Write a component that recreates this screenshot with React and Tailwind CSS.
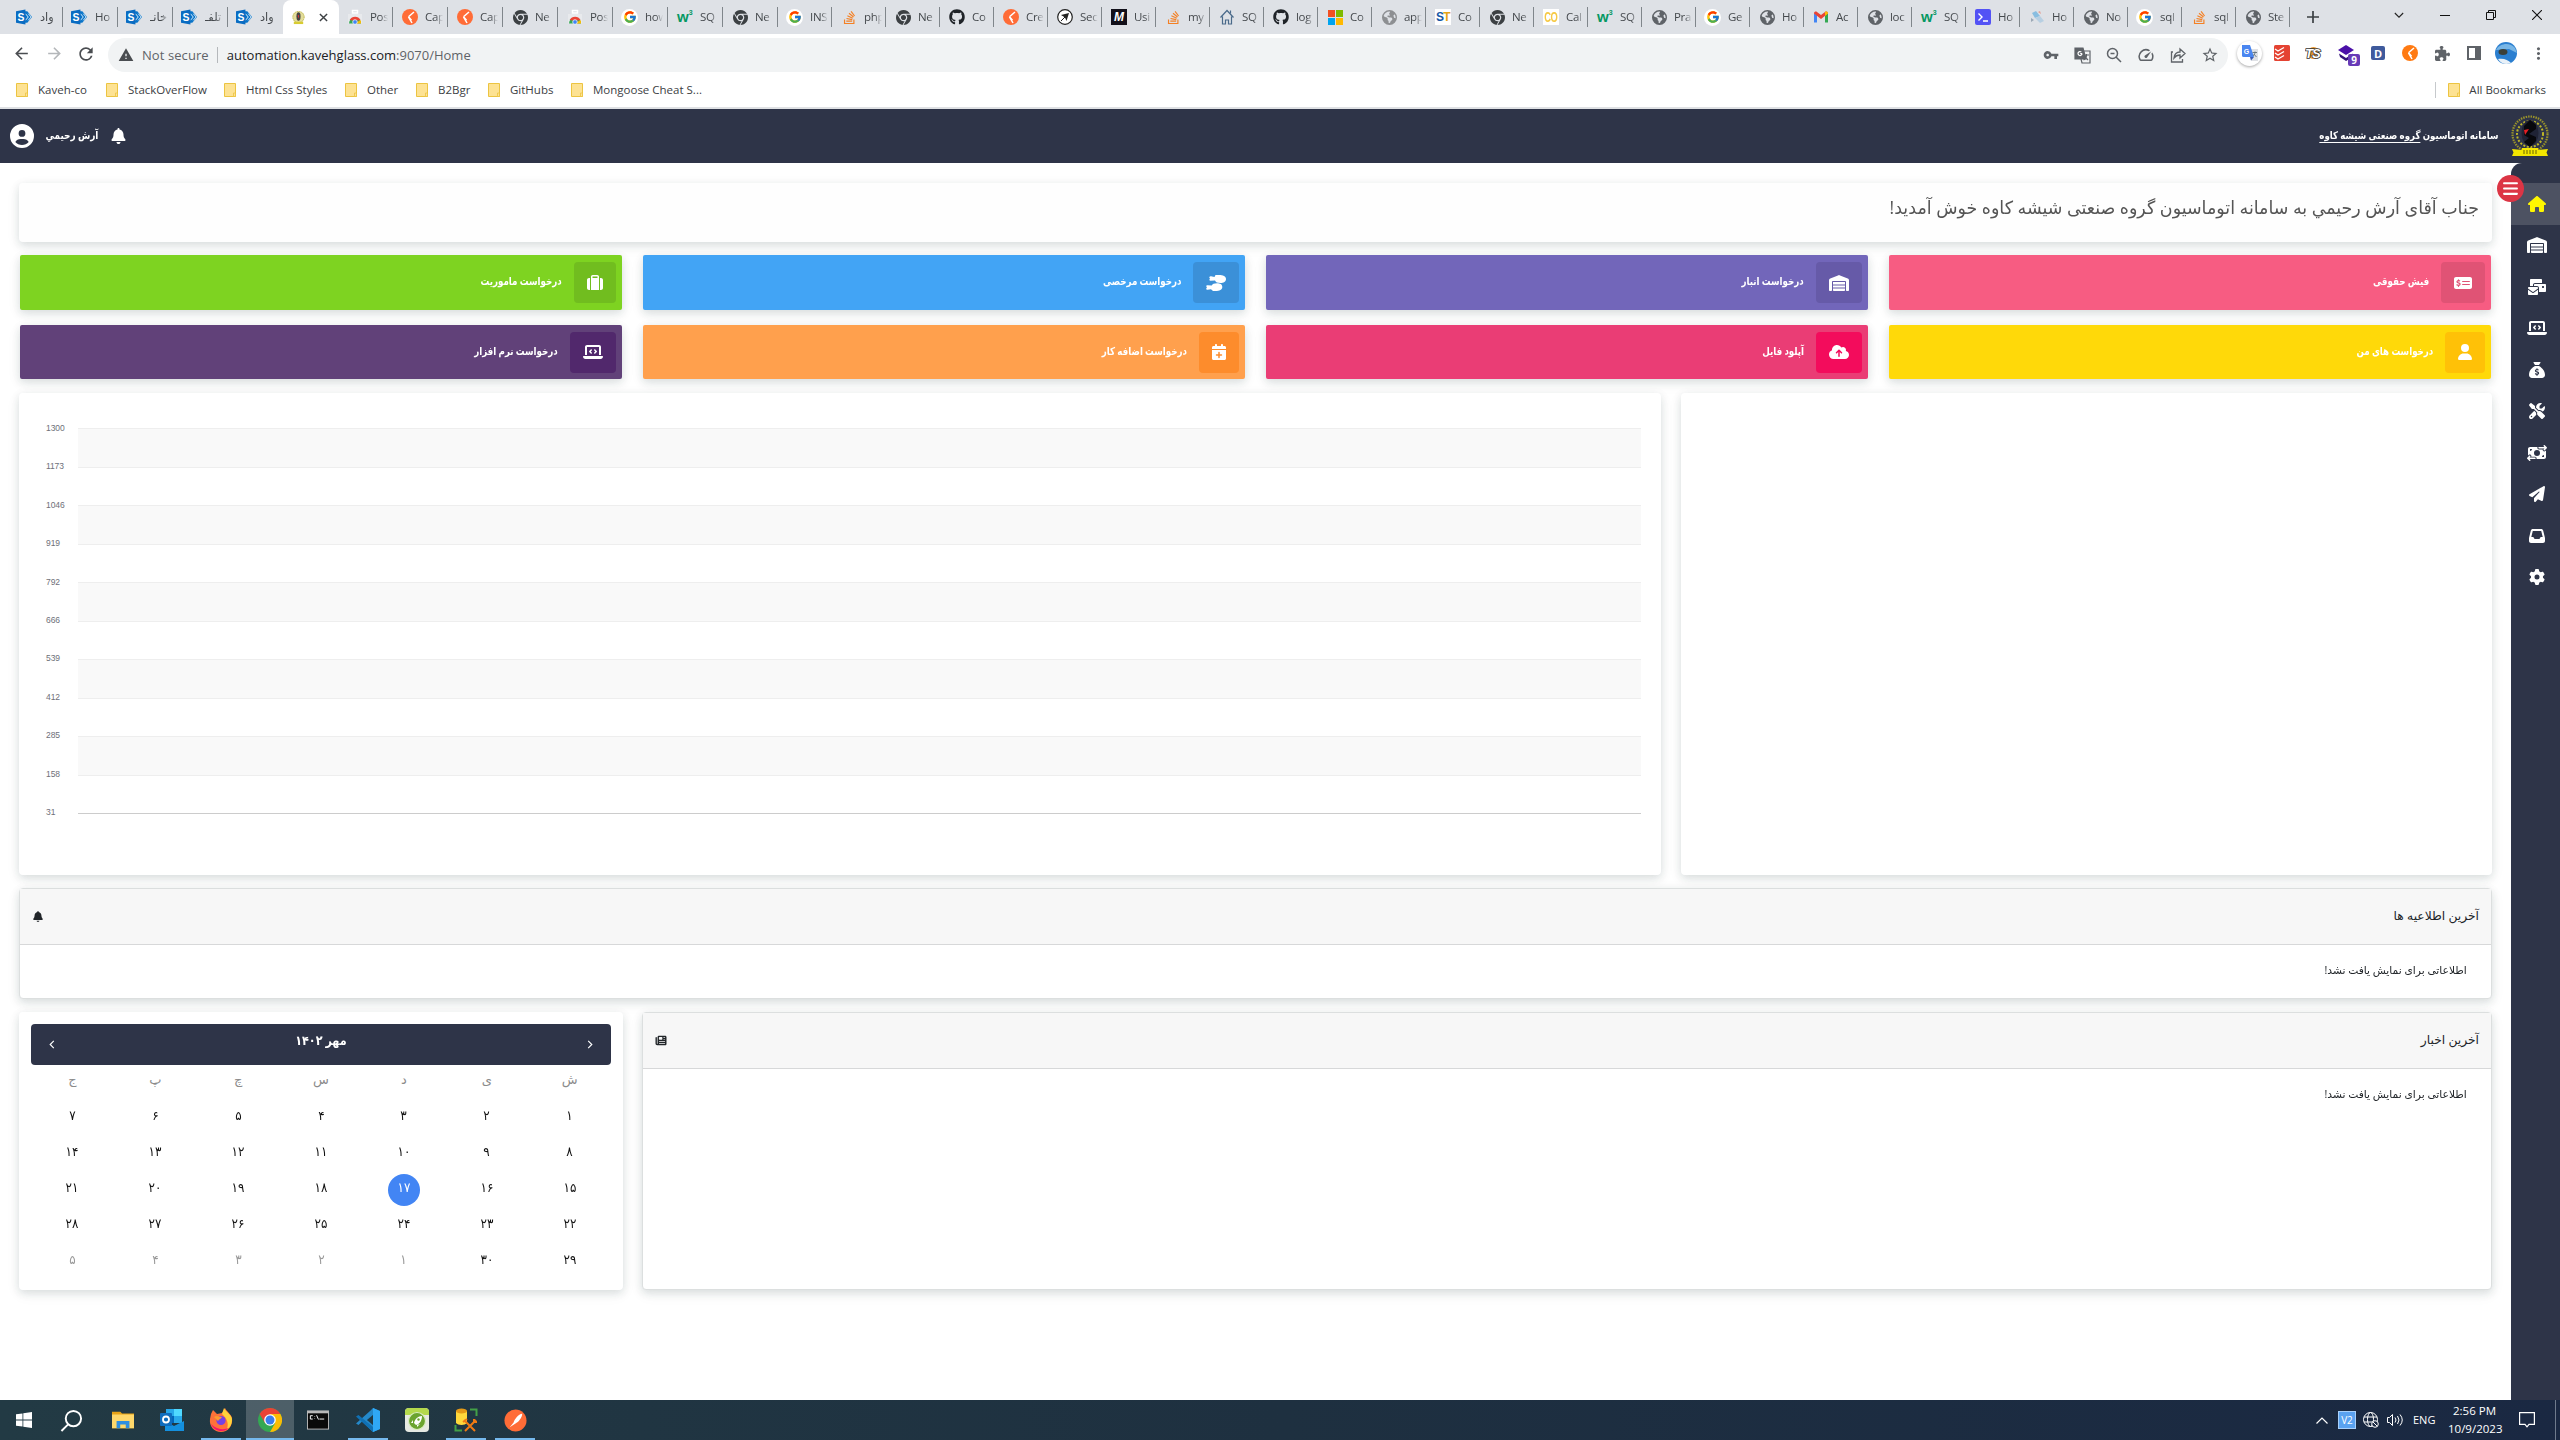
import React from "react";
import {
  FaHouse, FaWarehouse, FaEnvelopesBulk, FaLaptopCode, FaSackDollar, FaScrewdriverWrench,
  FaMoneyBillTransfer, FaPaperPlane, FaInbox, FaGear, FaCircleUser, FaBell, FaMoneyCheckDollar,
  FaSuitcase, FaCloudArrowUp, FaCalendarPlus, FaUser, FaNewspaper, FaBars,
  FaChrome, FaGithub, FaStackOverflow, FaEarthAmericas, FaPuzzlePiece,
} from "react-icons/fa6";
import { FcGoogle } from "react-icons/fc";
import {
  MdArrowBack, MdArrowForward, MdRefresh, MdWarning, MdStarBorder, MdMoreVert, MdSpeed, MdVpnKey,
} from "react-icons/md";

const ui = "font-['Open_Sans','DejaVu_Sans',sans-serif]";

/* ---------- tab favicons ---------- */
const SharePoint = () => (
  <svg viewBox="0 0 18 16" className="h-4 w-[17px]">
    <path d="M9 2h3l5 6-5 6H9z" fill="#0a75c9" />
    <path d="M10 4.500l3 3.500-3 3.500M13 4.500L16 8l-3 3.500" stroke="#fff" strokeWidth=".9" fill="none" />
    <path d="M0 2l10-2v16L0 14z" fill="#0a6cc2" />
    <text x="1.500" y="12" fontSize="11" fontWeight="700" fill="#fff" fontFamily="Liberation Sans">S</text>
  </svg>
);
const Store = () => (
  <svg viewBox="0 0 16 16" className="size-4">
    <path d="M1 5h14v9.500H1z" fill="#e8eaed" />
    <path d="M5.500 1.500h5V4h-5z" fill="none" stroke="#fff" strokeWidth="1.500" />
    <path d="M2 14.500a6 6 0 0 1 12 0z" fill="#34a853" />
    <path d="M2.800 11a6 6 0 0 1 10.600 0L8 12z" fill="#ea4335" />
    <path d="M13.400 11a6 6 0 0 1 .6 3.500H8z" fill="#fbbc05" />
    <circle cx="8" cy="13" r="2.300" fill="#4285f4" stroke="#fff" strokeWidth=".7" />
  </svg>
);
const Postman = ({ color = "#ff6c37" }) => (
  <svg viewBox="0 0 16 16" className="size-4">
    <circle cx="8" cy="8" r="8" fill={color} />
    <path d="M12 3L6.500 7.800M6.500 7.800l3 3.500M6.500 7.800L10 14" stroke="#fff" strokeWidth="1.500" fill="none" />
  </svg>
);
const ChromeGrey = () => <FaChrome className="size-[15px] text-[#3c4043]" />;
const GoogleG = () => (
  <span className="flex size-[17px] items-center justify-center rounded-full bg-white"><FcGoogle className="size-[14px]" /></span>
);
const W3 = () => (
  <span className="flex w-4 items-start font-['Liberation_Sans'] text-[15px] leading-4 font-bold text-[#059862]">w<span className="text-[7px] leading-2">3</span></span>
);
const StackO = () => <FaStackOverflow className="size-[15px] text-[#f48024]" />;
const Github = () => <FaGithub className="size-4 text-[#1f2328]" />;
const Globe = () => <FaEarthAmericas className="size-[15px] text-[#5f6368]" />;
const GlobeLight = () => <FaEarthAmericas className="size-[15px] text-[#8d8f92]" />;
const Compass = () => (
  <svg viewBox="0 0 16 16" className="size-4">
    <circle cx="8" cy="8" r="7.300" fill="#fff" stroke="#222" strokeWidth="1.200" />
    <path d="M4 6l8-2-2.500 8-1.500-3.500z" fill="#222" /><path d="M4 12l4-4" stroke="#222" />
  </svg>
);
const Medium = () => (
  <span className="flex size-4 items-center justify-center bg-[#12101a] font-['Liberation_Sans'] text-[12px] leading-none font-bold text-white italic">M</span>
);
const House = () => (
  <svg viewBox="0 0 16 16" className="size-4" fill="none" stroke="#4a6a8a" strokeWidth="1.200">
    <path d="M1.500 8.500L8 1.500l6.500 7M3.500 7.500V15h3v-4h3v4h3V7.500" /><path d="M11.500 1.500v3" />
  </svg>
);
const Microsoft = () => (
  <span className="grid size-[15px] grid-cols-2 gap-px">
    <i className="bg-[#f25022]" /><i className="bg-[#7fba00]" /><i className="bg-[#00a4ef]" /><i className="bg-[#ffb900]" />
  </span>
);
const ST = () => (
  <span className="flex size-4 items-center justify-center bg-white font-['Liberation_Sans'] text-[12px] leading-none font-bold tracking-tighter text-[#1458a6]">S<b className="text-[#e6a417]">T</b></span>
);
const CO = () => (
  <span className="flex size-4 items-center justify-center bg-white font-['Liberation_Sans'] text-[11px] leading-none font-bold tracking-tighter text-[#f6c945]">
    <span className="scale-x-[0.85] scale-y-[1.3]">CO</span>
  </span>
);
const Gmail = () => (
  <svg viewBox="0 0 16 16" className="size-4">
    <path d="M1 13.500V4l3 2.300v7.200z" fill="#4285f4" /><path d="M15 13.500V4l-3 2.300v7.200z" fill="#34a853" />
    <path d="M1 4.500C1 2.500 3 2 4 3l4 3 4-3c1-1 3-.5 3 1.500L8 10z" fill="#ea4335" /><path d="M12 3c1-1 3-.5 3 1.500L12 7z" fill="#fbbc05" />
  </svg>
);
const Terminal = () => (
  <svg viewBox="0 0 16 16" className="size-4"><rect width="16" height="16" rx="2" fill="#5352f5" /><path d="M3.500 4.500L7 8l-3.500 3.500M8 12h5" stroke="#fff" strokeWidth="1.400" fill="none" /></svg>
);
const Flake = () => (
  <svg viewBox="0 0 16 16" className="size-4"><path d="M3 4l4-2 4 5-5 2z" fill="#88bde0" /><path d="M6 9l5-2 4 5-4 2z" fill="#b7cfe2" /><path d="M9 3l2-1 1 3z" fill="#e49b8d" /><path d="M2 9l3 2-3 2z" fill="#9aa7b5" /></svg>
);
const Crest = () => (
  <svg viewBox="0 0 16 16" className="size-[15px]">
    <circle cx="8" cy="7.500" r="6.500" fill="#e3dd9a" /><circle cx="8" cy="7.500" r="6" fill="none" stroke="#b9b04a" strokeDasharray="1 1" />
    <ellipse cx="8" cy="7" rx="2.200" ry="4.500" fill="#444" /><path d="M7 6l1.500-1v4z" fill="#d33" /><path d="M3 12.500h10V15H3z" fill="#d8cc33" />
  </svg>
);

const firstTabs = [
  [SharePoint, "واد"], [SharePoint, "Ho"], [SharePoint, "خانـ"], [SharePoint, "تلفـ"], [SharePoint, "واد"],
];
const midTabs = [
  [Store, "Pos"], [Postman, "Cap"], [Postman, "Cap"], [ChromeGrey, "Ne"], [Store, "Pos"],
  [GoogleG, "how"], [W3, "SQ"], [ChromeGrey, "Ne"],
];
const lastTabs = [
  [GoogleG, "INS"], [StackO, "php"], [ChromeGrey, "Ne"], [Github, "Co"], [Postman, "Cre"], [Compass, "Sec"],
  [Medium, "Usi"], [StackO, "my"], [House, "SQ"], [Github, "log"], [Microsoft, "Co"], [GlobeLight, "app"],
  [ST, "Co"], [ChromeGrey, "Ne"], [CO, "Cal"], [W3, "SQ"], [Globe, "Pra"], [GoogleG, "Ge"], [Globe, "Ho"],
  [Gmail, "Ac"], [Globe, "loc"], [W3, "SQ"], [Terminal, "Ho"], [Flake, "Ho"], [Globe, "No"], [GoogleG, "sql"],
  [StackO, "sql"], [Globe, "Ste"],
];

function Tab({ tab, wide, last }) {
  const [Icon, label] = tab;
  return (
    <div className={`flex h-[34px] shrink-0 items-center ${wide ? "w-[55px]" : "w-[54px]"}`}>
      <span className="flex w-[25px] justify-end"><Icon /></span>
      <span className="ml-[7px] w-[18px] overflow-hidden [mask-image:linear-gradient(to_right,black_60%,transparent)] text-[11.500px] leading-4 tracking-[-0.3px] whitespace-nowrap text-[#45494d]">{label}</span>
      <i className={`ml-auto h-5 w-px ${last ? "bg-transparent" : "bg-[#80868b]"}`} />
    </div>
  );
}

function TabStrip() {
  return (
    <div className="flex h-[34px] items-center bg-[#dee1e6]">
      <div className="flex w-[283px] pl-[8px]">
        {firstTabs.map((t, i) => <Tab key={i} tab={t} wide last={i === 4} />)}
      </div>
      <div className="flex h-[34px] w-[56px] shrink-0 items-center rounded-t-lg bg-white pl-2">
        <Crest />
        <svg viewBox="0 0 10 10" className="ml-[13px] size-[9px]" stroke="#3c4043" strokeWidth="1.600"><path d="M1 1l8 8M9 1l-8 8" /></svg>
      </div>
      <div className="-ml-px flex">
        {midTabs.map((t, i) => <Tab key={i} tab={t} wide />)}
        {lastTabs.map((t, i) => <Tab key={i} tab={t} />)}
      </div>
      <div className="flex flex-1 items-center pl-[17px]">
        <svg viewBox="0 0 12 12" className="size-3" stroke="#3c4043" strokeWidth="1.700"><path d="M6 0v12M0 6h12" /></svg>
        <div className="flex h-full flex-1 items-center pb-1 pl-[75px]">
          <svg viewBox="0 0 12 8" className="mr-[36px] h-[7px] w-[10px] shrink-0" fill="none" stroke="#222" strokeWidth="1.300"><path d="M1 1l5 5 5-5" /></svg>
          <i className="mr-[36px] h-px w-[10px] shrink-0 bg-[#111]" />
          <svg viewBox="0 0 10 10" className="mr-[36px] size-[10px] shrink-0" fill="none" stroke="#111"><path d="M.5 2.500h7v7h-7zM2.500 2.500v-2h7v7h-2" /></svg>
          <svg viewBox="0 0 10 10" className="size-[10px] shrink-0" stroke="#111" strokeWidth="1.100"><path d="M0 0l10 10M10 0L0 10" /></svg>
        </div>
      </div>
    </div>
  );
}

function Toolbar() {
  return (
    <div className="flex h-[38px] items-center bg-white text-[#5f6368]">
      <div className="flex w-[108px] items-center pt-px pl-[12px]">
        <MdArrowBack className="size-[19px] text-[#4a4d51]" />
        <MdArrowForward className="ml-[14px] size-[19px] text-[#b4b7ba]" />
        <MdRefresh className="ml-[12px] size-[20px] text-[#4a4d51]" />
      </div>
      <div className="mt-1 flex h-[34px] w-[1120px] grow items-center rounded-full bg-[#f1f3f4] pr-[9px] pl-[10px]">
        <MdWarning className="size-4 text-[#4a4d51]" />
        <span className="ml-[8px] text-[13px] leading-5 tracking-[0.08px] whitespace-nowrap">Not secure</span>
        <i className="ml-[8px] h-4 w-px bg-[#b5b8bb]" />
        <span className="ml-[9px] text-[13px] leading-5 whitespace-nowrap"><span className="text-[#202124]">automation.kavehglass.com</span>:9070/Home</span>
        <div className="ml-auto flex items-center gap-[15px]">
          <MdVpnKey className="size-[16px]" />
          <svg viewBox="0 0 17 17" className="size-[17px]" fill="none" stroke="#5f6368" strokeWidth="1.200">
            <path d="M1 1h8l3 11H1z" fill="#5f6368" /><path d="M10 4h6v12H8l-1-4M10 8h5M12.500 7v1c0 2-1 4-3 5M11 9c1 2 2 3 3 4" />
            <path d="M8 6.500H6.200M8 6.500A2 2 0 1 1 7.300 5" stroke="#fff" />
          </svg>
          <svg viewBox="0 0 16 16" className="size-[16px]" fill="none" stroke="#5f6368" strokeWidth="1.500"><circle cx="6.500" cy="6.500" r="5" /><path d="M10 10l5 5M4.500 6.500h4" /></svg>
          <MdSpeed className="size-[18px]" />
          <svg viewBox="0 0 16 16" className="size-[16px]" fill="none" stroke="#5f6368" strokeWidth="1.300"><path d="M3 5H1.500v10h11v-3M4 11c.5-4 3-6 6-6V2l5 4.500-5 4.500V8C7 8 5.500 9 4 11z" /></svg>
          <MdStarBorder className="size-[18px]" />
        </div>
      </div>
      <div className="flex w-[332px] items-center pl-[9px]">
        <span className="flex size-[25px] items-center justify-center rounded-full bg-white shadow-[0_1px_3px_rgba(0,0,0,0.35)]">
          <svg viewBox="0 0 16 16" className="size-4">
            <path d="M6 4h10v12H9z" fill="#dfe1e5" /><path d="M0 0h8l4 12H1.500Q0 12 0 10.500z" fill="#4a86f0" /><path d="M8 12h4l-3 3.500z" fill="#3a5bb5" />
            <text x="1.800" y="8.500" fontSize="7" fontWeight="700" fill="#fff" fontFamily="Liberation Sans">G</text>
            <path d="M10.500 7.500H15M13 6.500v1c-.3 2-1.300 3-2 3.500M11.800 9l2.700 3" stroke="#5f6f7a" strokeWidth=".9" fill="none" />
          </svg>
        </span>
        <svg viewBox="0 0 16 16" className="ml-[12px] size-4"><rect width="16" height="16" rx="1.500" fill="#e44332" /><path d="M1 4l3 2 6-3.500M1 8l3 2 6-3.500M1 12l3 2 6-3.500" stroke="#fff" strokeWidth="1.300" fill="none" /></svg>
        <svg viewBox="0 0 18 16" className="ml-[15px] h-4 w-[18px]">
          <circle cx="8.500" cy="8" r="6" fill="#f0992b" />
          <text x="0" y="12.500" fontSize="13" fontWeight="700" fontStyle="italic" fontFamily="Liberation Sans" letterSpacing="-1" fill="#fff" stroke="#333" strokeWidth="1.600" paintOrder="stroke">TS</text>
        </svg>
        <span className="relative ml-[15px] size-[17px]">
          <svg viewBox="0 0 16 16" className="size-4"><path d="M8 0l8 5-8 5-8-5z" fill="#4b10a8" /><path d="M1 8.500L8 13l7-4.500-1 4L8 16l-6-4z" fill="#33127a" /></svg>
          <b className="absolute top-[9px] left-[10px] flex h-3 w-[12px] items-center justify-center rounded-[2px] bg-[#673ab7] text-[10px] leading-none text-white">9</b>
        </span>
        <span className="ml-[16px] flex size-[14px] items-center justify-center rounded-[2px] bg-[#3f5a9c] text-[11px] leading-none font-bold text-white">D</span>
        <span className="ml-[17px]"><Postman color="#ff7a12" /></span>
        <FaPuzzlePiece className="ml-[17px] size-[15px]" />
        <svg viewBox="0 0 14 14" className="ml-[17px] size-[14px]"><path d="M0 0h14v14H0zM2 2v10h6V2z" fillRule="evenodd" fill="#5f6368" /></svg>
        <svg viewBox="0 0 22 22" className="ml-[14px] size-[22px]"><circle cx="11" cy="11" r="11" fill="#2b7fd0" /><path d="M1 8C5 1 15 0 20 6l2 5-8-4z" fill="#78b6e6" /><ellipse cx="8" cy="10" rx="4.500" ry="3" fill="#3b3f38" /><path d="M3 17c6-1 10 1 13 4-5 2-10 1-13-4z" fill="#e9f1f8" /></svg>
        <MdMoreVert className="ml-[12px] size-[19px]" />
      </div>
    </div>
  );
}

const Folder = () => (
  <svg viewBox="0 0 12 14" className="h-[14px] w-[12px] shrink-0"><path d="M.5.5h11v13H.5z" fill="#fde293" stroke="#ecc441" /><path d="M9.500 10h2v3.500h-2z" fill="#fde293" stroke="#ecc441" strokeWidth=".8" /></svg>
);
const bookmarks = [
  ["Kaveh-co", "w-[90px]"], ["StackOverFlow", "w-[118px]"], ["Html Css Styles", "w-[121px]"], ["Other", "w-[71px]"],
  ["B2Bgr", "w-[72px]"], ["GitHubs", "w-[83px]"], ["Mongoose Cheat S...", "w-[150px]"],
];
function Bookmarks() {
  return (
    <div className="flex h-[37px] items-center border-b-2 border-[#dfe1e4] bg-white pl-[16px] text-[11.5px] text-[#3c4043]">
      {bookmarks.map(([b, w]) => (
        <div key={b} className={`flex items-center whitespace-nowrap ${w}`}><Folder /><span className="ml-[10px]">{b}</span></div>
      ))}
      <div className="ml-auto flex items-center pr-[14px]"><i className="mr-[12px] h-4 w-px bg-[#c6c9cc]" /><Folder /><span className="ml-[9px]">All Bookmarks</span></div>
    </div>
  );
}

function Logo() {
  return (
    <svg viewBox="0 0 38 42" className="h-[42px] w-[38px]">
      <circle cx="19" cy="19" r="17.500" fill="none" stroke="#99922b" strokeWidth="2.200" strokeDasharray="1.500 1" />
      <circle cx="19" cy="19" r="13" fill="none" stroke="#bdb428" strokeWidth="2" strokeDasharray="2 1.600" />
      <ellipse cx="19" cy="18" rx="8.500" ry="13" fill="#1f2335" />
      <path d="M19 5l6 5v4l-7 5 7 3v4l-6 6-6-5 5-4-5-3v-9z" fill="#07080c" />
      <path d="M13 15l5-1-4 6z" fill="#e31e24" />
      <path d="M1 34l10 1v-2h16v2l10-1-1.500 3.500L37 41H1l1.500-3.500z" fill="#f3e600" /><path d="M12 36h14M12 38h14" stroke="#6b6400" strokeDasharray="2 1" />
    </svg>
  );
}

function Header() {
  return (
    <header dir="rtl" className="flex h-[54px] items-center justify-between bg-[#2e3448] pr-[11px] pl-[10px] text-[11px] text-white">
      <div className="flex items-center gap-[13px]">
        <Logo />
        <span className="w-[179px] pb-[2px] whitespace-nowrap"><span className="inline-block origin-right scale-x-[0.82] text-[10.500px] font-semibold">سامانه اتوماسيون <span className="underline underline-offset-[3px]">گروه صنعتی شيشه كاوه</span></span></span>
      </div>
      <div className="flex items-center">
        <FaBell className="h-4 w-[15px]" />
        <span className="mr-[13px] w-[51px] pb-[2px] whitespace-nowrap"><span className="inline-block origin-right scale-x-[0.81] text-[11px] font-semibold">آرش رحيمي</span></span>
        <FaCircleUser className="mr-[13px] size-6" />
      </div>
    </header>
  );
}

const nav = [
  [FaHouse, "w-[18px]"], [FaWarehouse, "w-5"], [FaEnvelopesBulk, "w-5"], [FaLaptopCode, "w-5"], [FaSackDollar, "w-4"],
  [FaScrewdriverWrench, "w-4"], [FaMoneyBillTransfer, "w-5"], [FaPaperPlane, "w-4"], [FaInbox, "w-4"], [FaGear, "w-4"],
];
function Sidebar() {
  return (
    <aside className="relative w-[49px] shrink-0 rounded-tl-[11px] bg-[#2e3448] pt-[20px]">
      {nav.map(([Icon, w], i) => (
        <div key={i} className={`flex h-[41.500px] items-center justify-center pl-[3px] text-white ${i === 0 ? "bg-[#4d5262]" : ""}`}>
          <Icon className={`h-4 ${w} ${i === 0 ? "text-[#fff700]" : ""}`} />
        </div>
      ))}
      <span className="absolute top-[12px] right-[36px] flex size-[27px] items-center justify-center rounded-full bg-[#dc3545] text-white">
        <FaBars className="size-[17px]" />
      </span>
    </aside>
  );
}

const TwoHands = ({ className }) => (
  <svg viewBox="0 0 20 16" className={className} fill="currentColor">
    <path d="M9.500 0H13c4 0 7 1.200 7 4s-2.500 4-5.500 4c-3 0-5-.8-5.500-2.500L4.500 5.800C3 5.800 3 4 4.200 3.800L3.800 3.500C2.800 2.500 3.500 1 5 1.200L8.500 2z" />
    <path d="M7 16h2.500c4 0 6.800-1.200 6.800-4S14 8.300 11 8.300c-3 0-4.500.7-5.300 2.200L1.500 10.300c-1.500 0-1.700 1.700-.4 2l-.3.300c-1 .8-.5 2.200.7 2.100L5 14.300z" />
  </svg>
);

const shadow = "shadow-[0_3px_8px_rgba(30,50,60,0.14),0_4px_16px_rgba(30,70,50,0.05)]";
const actions = [
  ["فيش حقوقی", FaMoneyCheckDollar, "bg-[#f75c82]", "bg-[#e05375]", "w-[18px]"],
  ["درخواست انبار", FaWarehouse, "bg-[#7266ba]", "bg-[#665aa8]", "w-5"],
  ["درخواست مرخصی", TwoHands, "bg-[#42a4f5]", "bg-[#3b90d8]", "w-5"],
  ["درخواست ماموريت", FaSuitcase, "bg-[#7ed321]", "bg-[#71bd1f]", "w-4"],
  ["درخواست های من", FaUser, "bg-[#ffd909]", "bg-[#ffc107]", "w-[14px]"],
  ["آپلود فايل", FaCloudArrowUp, "bg-[#ea3d75]", "bg-[#f30c5c]", "w-5"],
  ["درخواست اضافه كار", FaCalendarPlus, "bg-[#ffa04d]", "bg-[#fd8c2c]", "w-[14px]"],
  ["درخواست نرم افزار", FaLaptopCode, "bg-[#614179]", "bg-[#51286c]", "w-5"],
];
const ticks = [1300, 1173, 1046, 919, 792, 666, 539, 412, 285, 158, 31];

function Card({ title, Icon, className }) {
  return (
    <section className={`flex flex-col rounded-[4px] border border-[#dcdfdf] bg-white ${shadow} ${className}`}>
      <div className="flex h-[56px] items-center justify-between border-b border-[#d7d8d9] bg-[#f7f7f7] px-[12px] text-[#212529]">
        <span className="pb-[1px] text-[12.300px]">{title}</span>
        <Icon className="h-[11px] w-[12px]" />
      </div>
      <p className="origin-right scale-x-[0.97] px-[25px] pt-[16px] text-[11px] leading-[18px] text-[#212529]">اطلاعاتی برای نمايش يافت نشد!</p>
    </section>
  );
}

const days = ["ش", "ی", "د", "س", "چ", "پ", "ج"];
const dates = [
  "۱", "۲", "۳", "۴", "۵", "۶", "۷", "۸", "۹", "۱۰", "۱۱", "۱۲", "۱۳", "۱۴", "۱۵", "۱۶", "۱۷", "۱۸", "۱۹", "۲۰", "۲۱",
  "۲۲", "۲۳", "۲۴", "۲۵", "۲۶", "۲۷", "۲۸", "۲۹", "۳۰", "۱", "۲", "۳", "۴", "۵",
];
function Calendar() {
  return (
    <section className={`h-[278px] w-[604px] rounded-[4px] bg-white px-[12px] pt-[12px] ${shadow}`}>
      <div className="flex h-[41px] items-center justify-between rounded-[4px] bg-[#2e3448] px-[18px] text-white">
        <svg viewBox="0 0 6 10" className="h-[9px] w-[6px]" fill="none" stroke="#fff" strokeWidth="1.300"><path d="M1 1l4 4-4 4" /></svg>
        <span className="scale-x-[0.86] pb-[7px] text-[13px] font-bold">مهر ۱۴۰۲</span>
        <svg viewBox="0 0 6 10" className="h-[9px] w-[6px]" fill="none" stroke="#fff" strokeWidth="1.300"><path d="M5 1L1 5l4 4" /></svg>
      </div>
      <div className="grid grid-cols-7 text-center text-[13px]">
        {days.map((d) => <span key={d} className="h-[34px] pt-[4px] leading-5 text-[#8b8b8b]">{d}</span>)}
        {dates.map((d, i) => (
          <span key={i} className={`flex h-[36px] justify-center text-[13px] ${i > 29 ? "text-[#999]" : "text-[#111]"}`}>
            <span className={`mt-[3px] flex size-8 items-start justify-center pt-[3px] leading-5 ${i === 16 ? "rounded-full bg-[#4285f4] text-white" : ""}`}><span className="scale-x-[0.92]">{d}</span></span>
          </span>
        ))}
      </div>
    </section>
  );
}

function Main() {
  return (
    <main className="min-w-0 flex-1 bg-white px-[19px] pt-[20px] text-[#212529]">
      <section className={`h-[59px] rounded-[4px] bg-[#fefefe] px-[13px] pt-[8px] text-[18px] leading-8 whitespace-nowrap text-[#555] ${shadow}`}>
        <h1 className="origin-right scale-x-[0.97]">جناب آقای آرش رحيمي به سامانه اتوماسيون گروه صنعتی شيشه كاوه خوش آمديد!</h1>
      </section>
      <div className="mt-[13px] grid grid-cols-4 grid-rows-[55px_54px] gap-x-[21px] gap-y-[15px] px-px">
        {actions.map(([label, Icon, bg, box, w]) => (
          <div key={label} className={`flex items-center rounded-[2px] px-[6px] text-[11px] font-semibold text-white ${bg} ${shadow}`}>
            <span className={`flex h-[41px] items-center rounded-[4px] px-[13px] ${box}`}><Icon className={`h-4 ${w}`} /></span>
            <span className="mr-[12px] origin-right scale-x-[0.79] pb-[2px] whitespace-nowrap">{label}</span>
          </div>
        ))}
      </div>
      <div className="mt-[14px] flex gap-[20px]">
        <section className={`h-[482px] w-[811px] rounded-[4px] bg-white ${shadow}`} />
        <section dir="ltr" className={`flex h-[482px] flex-1 rounded-[4px] bg-white pt-[35px] pr-[20px] pl-[27px] ${shadow}`}>
          <div className="-mt-[5px] flex w-[32px] flex-col font-['Liberation_Sans'] text-[8.500px] leading-[10px] text-[#6e7079]">
            {ticks.map((t) => <span key={t} className="h-[38.400px] shrink-0 tracking-[-0.1px]">{t}</span>)}
          </div>
          <div className="h-[386px] flex-1 border-b border-[#ccc]">
            {ticks.slice(1).map((t, i) => <div key={t} className={`h-[38.500px] border-t border-[#eee] ${i % 2 ? "" : "bg-[#f9f9f9]"}`} />)}
          </div>
        </section>
      </div>
      <Card title="آخرين اطلاعيه ها" Icon={FaBell} className="mt-[13px] h-[111px]" />
      <div className="mt-[13px] flex gap-[19px]">
        <Card title="آخرين اخبار" Icon={FaNewspaper} className="h-[278px] flex-1" />
        <Calendar />
      </div>
    </main>
  );
}

/* ---------- Windows taskbar ---------- */
const apps = [
  ["w-[48px]", "", <svg viewBox="0 0 16 16" className="size-4" fill="#fff"><path d="M0 2.300l6.500-.9v6.200H0zM7.300 1.300L16 0v7.600H7.300zM0 8.400h6.500v6.200L0 13.700zM7.300 8.400H16V16l-8.700-1.300z" /></svg>],
  ["w-[50px] pr-[3px]", "", <svg viewBox="0 0 24 24" className="size-[23px]" fill="none" stroke="#fff" strokeWidth="2"><circle cx="14" cy="10" r="8" /><path d="M8.500 16L1.500 23" /></svg>],
  ["w-[50px]", "", <svg viewBox="0 0 24 20" className="h-[20px] w-[22px]"><path d="M0 1h9l2 2h13v16H0z" fill="#e8a317" /><path d="M0 4h24v15H0z" fill="#ffd86b" /><path d="M5 19v-8h14v8h-4v-4H9v4z" fill="#2f8fe0" /></svg>],
  ["w-[49px] pr-px", "", <svg viewBox="0 0 24 24" className="size-6"><path d="M6 1h16v14H6z" fill="#28a8ea" /><path d="M14 1h8v7h-8z" fill="#50d9ff" /><path d="M6 8h8v7H6z" fill="#0364b8" /><path d="M5 13l9 5 10-5v10H5z" fill="#1490df" /><rect y="5" width="12" height="13" rx="1" fill="#0f6cbd" /><circle cx="6" cy="11.500" r="3" fill="none" stroke="#fff" strokeWidth="1.800" /></svg>],
  ["w-[49px] pr-px", "w-[40px]", <svg viewBox="0 0 24 24" className="size-6"><path d="M2 6l2-4 4 4 5-1 3-5c2 4 6 6 7 10 1 8-4 14-11 14S0 18 1 11z" fill="#ff7139" /><path d="M15 0c2 4 7 6 8 11 0 4-1 8-5 10 2-6 0-10-5-15z" fill="#ffd43b" /><path d="M2 16c3 8 13 9 18 4-5 2-12 2-18-4z" fill="#f5156c" /><circle cx="12" cy="12.500" r="4.600" fill="#7542e5" /><path d="M5 9c3-2 5 0 8 0-1 2-3 2-4 4z" fill="#ff9a2e" /></svg>],
  ["w-[48px] bg-white/20", "w-full", <svg viewBox="0 0 24 24" className="size-6"><circle cx="12" cy="12" r="12" fill="#34a853" /><path d="M12 12L1.600 6A12 12 0 0 1 22.400 6z" fill="#ea4335" /><path d="M12 6h10.400A12 12 0 0 1 12 24l5.200-9z" fill="#fbbc05" /><path d="M1.600 6L7 15l5-9z" fill="#ea4335" /><circle cx="12" cy="12" r="5.800" fill="#fff" /><circle cx="12" cy="12" r="4.500" fill="#3b7ded" /></svg>],
  ["w-[49px] pr-px", "", <svg viewBox="0 0 23 20" className="h-[20px] w-[22px]"><rect width="23" height="20" fill="#b8b8b8" /><path d="M1 3h21v16H1z" fill="#0a0a0a" /><path d="M6 5.500H3.500v3.500H6M8 6v.5M8 8.500V9M10 5l2 4.500M13 9h5" stroke="#fff" fill="none" /></svg>],
  ["w-[50px]", "w-[40px]", <svg viewBox="0 0 24 24" className="size-6"><path d="M17 0l7 3v18l-7 3L6 13.500 2.500 17 0 15.500 14 3z" fill="#2489ca" /><path d="M17 0l7 3v18l-7 3z" fill="#2fa8f5" /><path d="M17 7v10l-6-5zM0 8.500L2.500 7 17 19v5z" fill="#1070b3" /><path d="M17 7v10l-6-5z" fill="#223a44" /></svg>],
  ["w-[49px] pr-[2px]", "", <svg viewBox="0 0 24 24" className="size-6"><rect width="24" height="24" rx="4" fill="#e6e9e2" /><path d="M0 4a4 4 0 0 1 4-4h16a4 4 0 0 1 4 4v3H0z" fill="#b4d94c" /><circle cx="12" cy="13" r="8.500" fill="#6ba42f" stroke="#dbeec0" strokeWidth="1.200" /><path d="M17 8c-4 0-7 3-8 7l2 2c4-1 6-5 6-9zM8 12l-2 3 2 0M12 17l0 2 3-3" fill="#fff" /><circle cx="13.500" cy="11.500" r="1.200" fill="#6ba42f" /></svg>],
  ["w-[49px] pr-px", "w-[40px]", <svg viewBox="0 0 24 24" className="size-6"><path d="M16 1.500h6.500V8M1.500 17v5.500H8" stroke="#43a047" strokeWidth="2" fill="none" /><path d="M2 3v12c2 2.500 9 2.500 11 0V3z" fill="#ffd83b" /><ellipse cx="7.500" cy="3" rx="5.500" ry="2.500" fill="#e59a17" /><path d="M10 12l11 11M22 12L11 23M9 14l4-3M20 11v3h3" stroke="#f07a13" strokeWidth="2" /></svg>],
  ["w-[48px]", "w-[40px]", <svg viewBox="0 0 24 24" className="size-[23px]"><circle cx="12" cy="12" r="11.500" fill="#ff6c37" /><path d="M19 5c-4 0-8 6-9 9l-4 5 6-4c3-1 7-6 7-10z" fill="#fff" /></svg>],
];
function Taskbar() {
  return (
    <footer className="flex h-10 shrink-0 items-center bg-linear-to-r from-[#223a44] via-[#1e3040] to-[#1a2842] text-[11.500px] text-white">
      {apps.map(([w, line, icon], i) => (
        <div key={i} className={`relative flex h-10 items-center justify-center ${w}`}>
          {icon}
          {line && <i className={`absolute bottom-0 h-[2px] bg-[#76b9ed] ${line}`} />}
        </div>
      ))}
      <div className="ml-auto flex h-10 items-center">
        <svg viewBox="0 0 12 7" className="h-[7px] w-3" fill="none" stroke="#fff" strokeWidth="1.200"><path d="M.5 6.500L6 1l5.500 5.500" /></svg>
        <span className="ml-[11px] flex size-4 items-center justify-center bg-[#5aa2f0] text-[10px] leading-none outline outline-[#a8d0fb]">V2</span>
        <svg viewBox="0 0 16 16" className="ml-[8px] size-4" fill="none" stroke="#fff"><circle cx="7.500" cy="7.500" r="7" /><ellipse cx="7.500" cy="7.500" rx="3" ry="7" /><path d="M1 5h13M1 10h13" /><circle cx="12" cy="12" r="3.300" fill="#1b2942" /><path d="M10 10l4 4" /></svg>
        <svg viewBox="0 0 17 14" className="ml-[8px] h-[14px] w-[17px]" fill="none" stroke="#fff"><path d="M.5 4.500h2l3-3v11l-3-3h-2zM8 4.500q2 2.500 0 5M10.500 3q3 4 0 8M13 1.500q4.500 5.500 0 11" /></svg>
        <span className="ml-[9px] w-[24px] text-[11px]">ENG</span>
        <div className="ml-[11px] w-[53px] text-center leading-[18px] whitespace-nowrap">2:56 PM<br />10/9/2023</div>
        <svg viewBox="0 0 16 16" className="ml-[18px] size-4" fill="none" stroke="#fff" strokeWidth="1.200"><path d="M.6.6h14.800v11.800H10l-2 2.500-2-2.500H.6z" /></svg>
        <i className="ml-[20px] h-10 w-px bg-[#6f7a8c]" /><i className="w-[4px]" />
      </div>
    </footer>
  );
}

export default function App() {
  return (
    <div className={`flex h-[1440px] w-[2560px] flex-col overflow-hidden bg-white ${ui}`}>
      <TabStrip />
      <Toolbar />
      <Bookmarks />
      <Header />
      <div dir="rtl" className="flex min-h-0 flex-1">
        <Sidebar />
        <Main />
      </div>
      <Taskbar />
    </div>
  );
}
